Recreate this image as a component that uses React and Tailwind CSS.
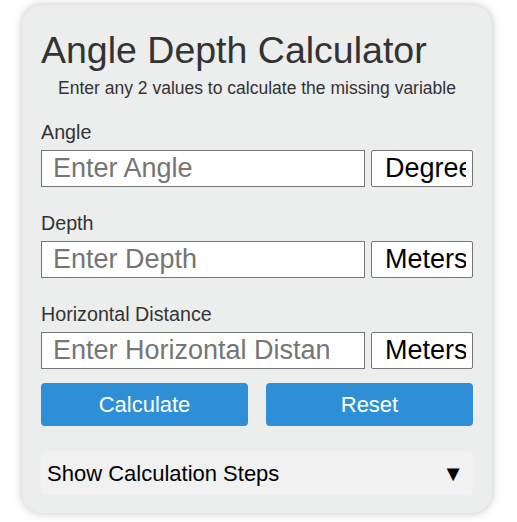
import { useState } from "react";

const fields = [
  { id: "angle", label: "Angle", placeholder: "Enter Angle", unit: "Degrees" },
  { id: "depth", label: "Depth", placeholder: "Enter Depth", unit: "Meters" },
  {
    id: "distance",
    label: "Horizontal Distance",
    placeholder: "Enter Horizontal Distance",
    unit: "Meters",
  },
];

export default function App() {
  const [values, setValues] = useState({ angle: "", depth: "", distance: "" });
  const [open, setOpen] = useState(false);

  const reset = () => setValues({ angle: "", depth: "", distance: "" });

  return (
    <div className="min-h-screen bg-white font-['Liberation_Sans',Arial,sans-serif]">
      <div className="ml-[22px] pt-[5px]">
        <div className="w-[470px] rounded-[20px] bg-[#eceded] px-[19px] pt-[24px] pb-[18px] shadow-[0_0_9px_rgba(0,0,0,0.25)]">
          <h1 className="text-[37.5px] leading-[42px] text-[#333333]">Angle Depth Calculator</h1>
          <p className="mt-[7px] text-center text-[17.5px] leading-[20px] text-[#333333]">
            Enter any 2 values to calculate the missing variable
          </p>

          <div className="mt-[23px] flex flex-col gap-[25px]">
            {fields.map((f) => (
              <div key={f.id}>
                <label className="block text-[19.7px] leading-[22px] text-[#333333]">{f.label}</label>
                <div className="mt-[7px] flex gap-[6px]">
                  <input
                    type="text"
                    value={values[f.id]}
                    onChange={(e) => setValues((p) => ({ ...p, [f.id]: e.target.value }))}
                    placeholder={f.placeholder}
                    className="h-[37px] w-[324px] border border-[#767676] bg-white pl-[11px] pr-[35px] text-[27px] text-black placeholder:text-[#757575] outline-none"
                  />
                  <div className="h-[37px] w-[102px] whitespace-nowrap rounded-[2px] border border-[#767676] bg-white pl-[13px] pr-[6px] text-[27px] leading-[35px] text-black">
                    <div className="overflow-hidden">{f.unit}</div>
                  </div>
                </div>
              </div>
            ))}
          </div>

          <div className="mt-[14px] flex gap-[18px]">
            <button className="h-[43px] flex-1 rounded-[4px] bg-[#2e8fd6] text-[22px] text-white">Calculate</button>
            <button
              onClick={reset}
              className="h-[43px] flex-1 rounded-[4px] bg-[#2e8fd6] text-[22px] text-white"
            >
              Reset
            </button>
          </div>

          <button
            onClick={() => setOpen(!open)}
            className="mt-[25px] flex h-[44px] w-full items-center justify-between rounded-[5px] bg-[#f1f1f1] pl-[6px] pr-[9px] text-[22px] text-black"
          >
            <span>Show Calculation Steps</span>
            <span>▼</span>
          </button>
        </div>
      </div>
    </div>
  );
}
